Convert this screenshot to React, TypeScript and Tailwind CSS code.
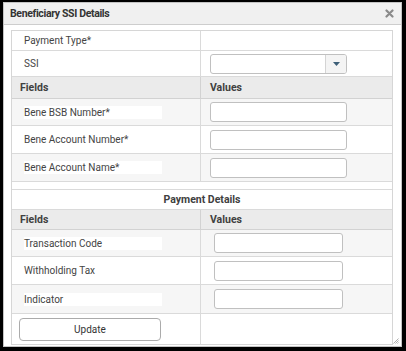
import React from "react";

const font = { fontFamily: "Roboto, 'Liberation Sans', sans-serif" };

function Label({ text, stripe }: { text: string; stripe?: boolean }) {
  return (
    <div className="w-[189px] shrink-0 border-r border-[#dadada] flex items-center pl-[12px] h-full">
      <span className={`w-[138px] h-[13px] flex items-center text-[10px] text-[#444] ${stripe ? "bg-white" : ""}`}>{text}</span>
    </div>
  );
}

function Row({ h, stripe, label, wide = true }: { h: string; stripe?: boolean; label: string; wide?: boolean }) {
  return (
    <div className={`flex border-b border-[#dadada] ${h} ${stripe ? "bg-[#f6f6f6]" : "bg-white"}`}>
      <Label text={label} stripe={stripe} />
      <div className={`flex items-center ${wide ? "pl-[9px]" : "pl-[13px]"}`}>
        <div className={`${wide ? "w-[137px]" : "w-[129px]"} h-[20px] bg-white border border-[#c0c0c0] rounded-[3px]`} />
      </div>
    </div>
  );
}

function HeaderRow({ h }: { h: string }) {
  return (
    <div className={`flex border-b border-[#d2d2d2] bg-[#ebebeb] ${h} text-[10.5px] font-bold text-[#404040]`}>
      <div className="w-[189px] shrink-0 border-r border-[#d2d2d2] flex items-center pl-[8px]">Fields</div>
      <div className="flex items-center pl-[9px]">Values</div>
    </div>
  );
}

export default function App() {
  return (
    <div className="w-[406px] h-[351px] bg-black pt-[2px] pl-[3px] pr-[4px] pb-[4px]" style={font}>
      <div className="h-full bg-white border border-[#c4c4c4] flex flex-col relative">
        <div className="h-[22px] shrink-0 bg-[#f0f0f0] border-b border-[#cdcdcd] flex items-center justify-between pl-[6px] pr-[7px]">
          <span className="text-[10.5px] font-bold text-[#333] tracking-[-0.35px]">Beneficiary SSI Details</span>
          <svg width="9" height="9" viewBox="0 0 9 9">
            <path d="M1.5 1.5 L7.5 7.5 M7.5 1.5 L1.5 7.5" stroke="#8a8a8a" strokeWidth="2.2" strokeLinecap="round" />
          </svg>
        </div>
        <div className="pl-[7px] pt-[5px]">
          <div className="w-[382px] border-x border-t border-[#d6d6d6]">
            <div className="flex border-b border-[#dadada] h-[20px]">
              <div className="w-[189px] shrink-0 border-r border-[#dadada] flex items-center pl-[12px] text-[10px] text-[#444]">Payment Type*</div>
              <div />
            </div>
            <div className="flex border-b border-[#dadada] h-[26px]">
              <div className="w-[189px] shrink-0 border-r border-[#dadada] flex items-center pl-[12px] text-[10px] text-[#444]">SSI</div>
              <div className="flex items-center pl-[9px]">
                <div className="w-[137px] h-[20px] border border-[#c0c0c0] rounded-[3px] flex bg-white overflow-hidden">
                  <div className="flex-1" />
                  <div className="w-[21px] border-l border-[#d4d4d4] bg-[#f4f4f4] flex items-center justify-center">
                    <svg width="7" height="4" viewBox="0 0 7 4"><path d="M0 0 H7 L3.5 4 Z" fill="#3d5f78" /></svg>
                  </div>
                </div>
              </div>
            </div>
            <HeaderRow h="h-[22px]" />
            <Row h="h-[27px]" stripe label="Bene BSB Number*" />
            <Row h="h-[28px]" label="Bene Account Number*" />
            <Row h="h-[28px]" stripe label="Bene Account Name*" />
            <div className="h-[8px] border-b border-[#dadada]" />
            <div className="h-[20px] border-b border-[#dadada] flex items-center justify-center text-[10.5px] font-bold text-[#404040]">Payment Details</div>
            <HeaderRow h="h-[20px]" />
            <Row h="h-[27px]" stripe label="Transaction Code" wide={false} />
            <Row h="h-[28px]" label="Withholding Tax" wide={false} />
            <Row h="h-[29px]" stripe label="Indicator" wide={false} />
            <div className="flex border-b border-[#d6d6d6] h-[31px]">
              <div className="w-[189px] shrink-0 border-r border-[#dadada] flex items-center pl-[7px]">
                <div className="w-[142px] h-[23px] border border-[#ababab] rounded-[4px] bg-white flex items-center justify-center text-[10px] text-[#333]">Update</div>
              </div>
              <div />
            </div>
          </div>
        </div>
        <svg className="absolute right-[2px] bottom-[2px]" width="6" height="6" viewBox="0 0 6 6">
          <path d="M5.5 0.5 L0.5 5.5 M5.5 2.5 L2.5 5.5 M5.5 4.5 L4.5 5.5" stroke="#9a9a9a" strokeWidth="0.8" />
        </svg>
      </div>
    </div>
  );
}
